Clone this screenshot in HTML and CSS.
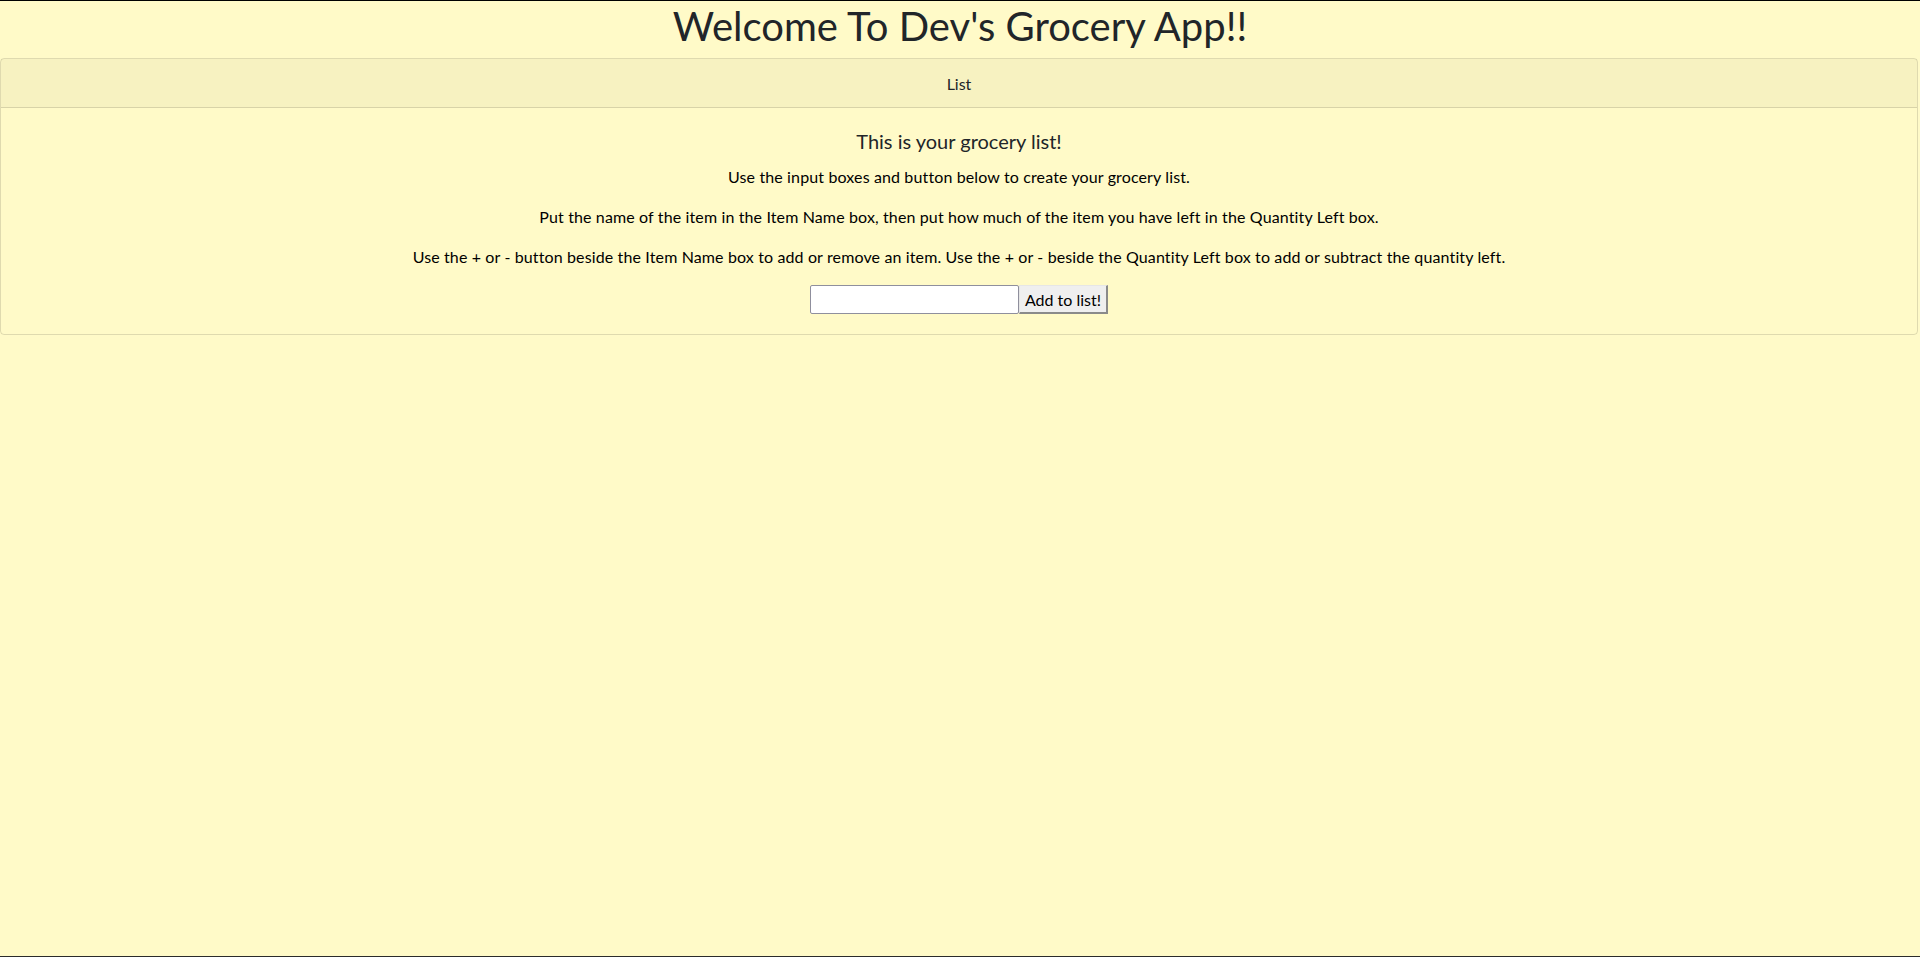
FILE: index.html
```html
<!DOCTYPE html>
<html lang="en">
<head>
<meta charset="utf-8">
<title>Dev's Grocery App</title>
<link rel="stylesheet" href="styles.css">
</head>
<body>
  <h1 class="app-title">Welcome To Dev's Grocery App!!</h1>
  <div class="card">
    <div class="card-header">List</div>
    <div class="card-body">
      <h5 class="card-title">This is your grocery list!</h5>
      <p class="card-text">Use the input boxes and button below to create your grocery list.</p>
      <p class="card-text">Put the name of the item in the Item Name box, then put how much of the item you have left in the Quantity Left box.</p>
      <p class="card-text">Use the + or - button beside the Item Name box to add or remove an item. Use the + or - beside the Quantity Left box to add or subtract the quantity left.</p>
      <form class="add-form">
        <input class="item-input" type="text">
        <button class="add-btn" type="button">Add to list!</button>
      </form>
    </div>
  </div>
</body>
</html>
```

FILE: styles.css
```css
html {
  height: 100%;
}

body {
  margin: 0;
  min-height: 100vh;
  box-sizing: border-box;
  border-top: 1px solid #000;
  border-bottom: 1px solid #2b2b2b;
  background: #fffac8;
  color: #212529;
  font-family: Lato, "Open Sans", sans-serif;
  font-size: 16px;
  line-height: 1.5;
}

.app-title {
  margin: 0 0 9px;
  padding-top: 1px;
  font-size: 40px;
  font-weight: 400;
  line-height: 1.2;
  text-align: center;
}

.card {
  margin-right: 2px;
  margin-top: -1px;
  border: 1px solid rgba(0, 0, 0, 0.125);
  border-radius: 4px;
  text-align: center;
}

.card-header {
  padding: 13px 20px 11px;
  background: rgba(0, 0, 0, 0.03);
  border-bottom: 1px solid rgba(0, 0, 0, 0.125);
}

.card-body {
  padding: 21px 20px 20px;
}

.card-title {
  margin: 0 0 12px;
  font-size: 20px;
  font-weight: 400;
  line-height: 1.2;
}

.card-text {
  margin: 0 0 16px;
  color: #000;
  letter-spacing: 0.13px;
}

.add-form {
  display: flex;
  justify-content: center;
}

.item-input {
  width: 209px;
  height: 29px;
  box-sizing: border-box;
  margin: 0;
  border: 1px solid #8f8f9d;
  border-radius: 2px;
  background: #fff;
  font: 16px Lato, sans-serif;
}

.add-btn {
  width: 89px;
  height: 29px;
  box-sizing: border-box;
  margin: 0;
  padding: 0 2px;
  border-style: solid;
  border-width: 1px 2px 2px 1px;
  border-color: #e6e6e6 #8a8a8a #8a8a8a #e6e6e6;
  background: #efefef;
  color: #000;
  font: 16px Lato, sans-serif;
}
```
